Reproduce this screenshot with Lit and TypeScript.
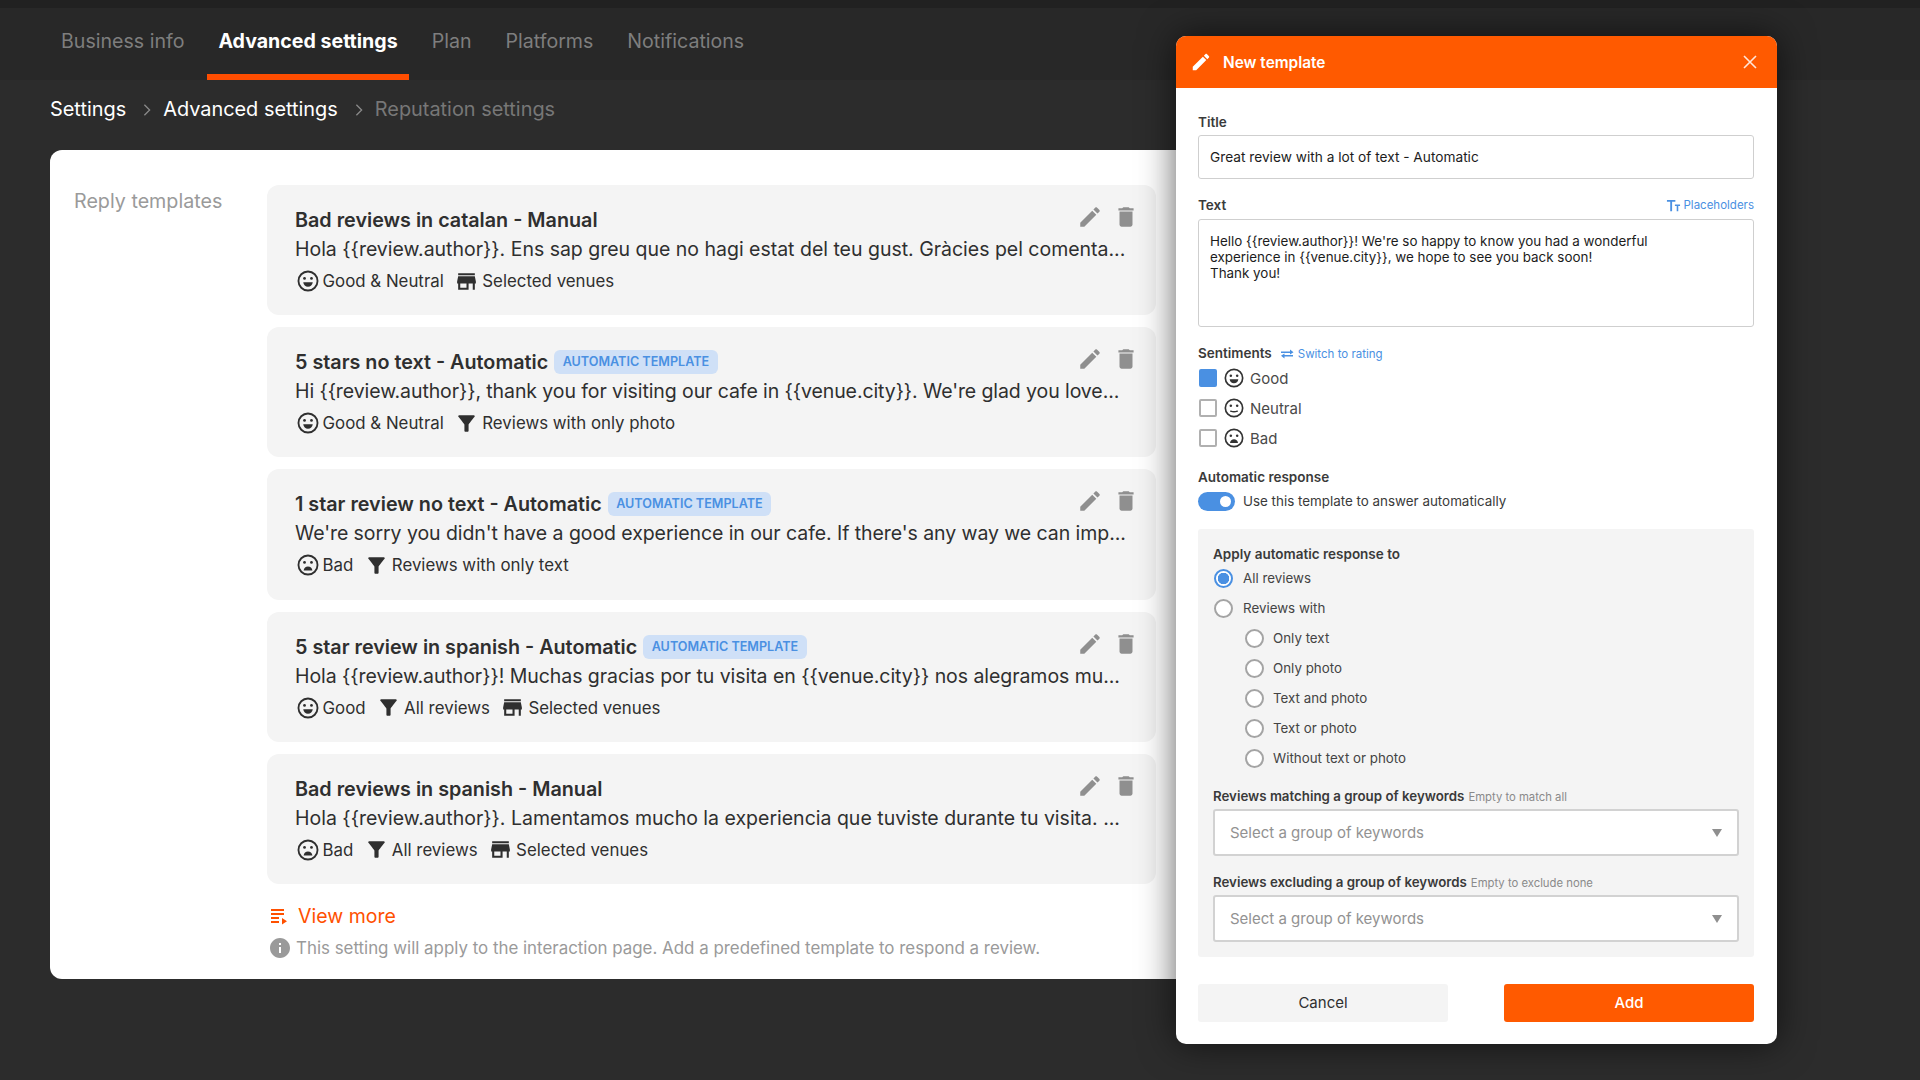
import { LitElement, html, css, svg } from "lit";
import { customElement } from "lit/decorators.js";

const P = {
  edit: "M3 17.25V21h3.75L17.81 9.94l-3.75-3.75L3 17.25zM20.71 7.04c.39-.39.39-1.02 0-1.41l-2.34-2.34c-.39-.39-1.02-.39-1.41 0l-1.83 1.83 3.75 3.75 1.83-1.83z",
  del: "M6 19c0 1.1.9 2 2 2h8c1.1 0 2-.9 2-2V7H6v12zM19 4h-3.5l-1-1h-5l-1 1H5v2h14V4z",
  store: "M20 4H4v2h16V4zm1 10v-2l-1-5H4l-1 5v2h1v6h10v-6h4v6h2v-6h1zm-9 4H6v-4h6v4z",
  filter: "M4.25 5.61C6.27 8.2 10 13 10 13v6c0 .55.45 1 1 1h2c.55 0 1-.45 1-1v-6s3.72-4.8 5.74-7.39c.51-.66.04-1.61-.79-1.61H5.04c-.83 0-1.3.95-.79 1.61z",
  info: "M12 2C6.48 2 2 6.48 2 12s4.48 10 10 10 10-4.48 10-10S17.52 2 12 2zm1 15h-2v-6h2v6zm0-8h-2V7h2v2z",
};
const icon = (d: string, cls: string) =>
  html`<svg class=${cls} viewBox="0 0 24 24" fill="currentColor"><path d=${d}></path></svg>`;

const face = (kind: "good" | "neutral" | "bad", cls = "face") => html`<svg class=${cls} viewBox="0 0 24 24">
  <circle cx="12" cy="12" r="10.4" fill="none" stroke="currentColor" stroke-width="2"></circle>
  <circle cx="8.2" cy="9.2" r="1.5" fill="currentColor"></circle>
  <circle cx="15.8" cy="9.2" r="1.5" fill="currentColor"></circle>
  ${kind === "good"
    ? svg`<path d="M6.8 13.4h10.4c-.3 3-2.5 4.9-5.2 4.9s-4.9-1.9-5.2-4.9z" fill="currentColor"></path>`
    : kind === "neutral"
      ? svg`<path d="M8 15.8c2.6 1 5.4 1 8 0" fill="none" stroke="currentColor" stroke-width="1.7" stroke-linecap="round"></path>`
      : svg`<path d="M7.2 18c.4-2.8 2.3-4.4 4.8-4.4s4.4 1.6 4.8 4.4z" fill="currentColor"></path>`}
</svg>`;

type Meta = { i: "good" | "bad" | "filter" | "store"; t: string };
const items: { title: string; badge: boolean; body: string; ls: number; meta: Meta[] }[] = [
  {
    title: "Bad reviews in catalan - Manual",
    badge: false,
    ls: -0.012,
    body: "Hola {{review.author}}. Ens sap greu que no hagi estat del teu gust. Gràcies pel comenta...",
    meta: [{ i: "good", t: "Good & Neutral" }, { i: "store", t: "Selected venues" }],
  },
  {
    title: "5 stars no text - Automatic",
    badge: true,
    ls: -0.09,
    body: "Hi {{review.author}}, thank you for visiting our cafe in {{venue.city}}. We're glad you love...",
    meta: [{ i: "good", t: "Good & Neutral" }, { i: "filter", t: "Reviews with only photo" }],
  },
  {
    title: "1 star review no text - Automatic",
    badge: true,
    ls: -0.068,
    body: "We're sorry you didn't have a good experience in our cafe. If there's any way we can imp...",
    meta: [{ i: "bad", t: "Bad" }, { i: "filter", t: "Reviews with only text" }],
  },
  {
    title: "5 star review in spanish - Automatic",
    badge: true,
    ls: -0.054,
    body: "Hola {{review.author}}! Muchas gracias por tu visita en {{venue.city}} nos alegramos mu...",
    meta: [{ i: "good", t: "Good" }, { i: "filter", t: "All reviews" }, { i: "store", t: "Selected venues" }],
  },
  {
    title: "Bad reviews in spanish - Manual",
    badge: false,
    ls: 0,
    body: "Hola {{review.author}}. Lamentamos mucho la experiencia que tuviste durante tu visita. ...",
    meta: [{ i: "bad", t: "Bad" }, { i: "filter", t: "All reviews" }, { i: "store", t: "Selected venues" }],
  },
];

@customElement("app-root")
export class AppRoot extends LitElement {
  static styles = css`
    :host {
      display: block;
      position: relative;
      width: 1920px;
      height: 1080px;
      overflow: hidden;
      background: #2c2c2c;
      font-family: Inter, "Liberation Sans", sans-serif;
      color: #2f2f2f;
    }
    * { box-sizing: border-box; }
    svg { display: block; flex: none; }
    .strip { height: 8px; background: #212121; }
    .tabs {
      height: 72px;
      background: #282828;
      display: flex;
      padding-left: 50px;
      gap: 12px;
      font-size: 19.6px;
      color: #7e7e7e;
    }
    .tab { padding: 0 11px; display: flex; align-items: center; height: 72px; padding-bottom: 6px; }
    .tab.on { color: #fff; font-weight: 700; box-shadow: inset 0 -6px 0 #ff4d00; }
    .crumbs {
      height: 70px;
      padding: 19px 0 0 50px;
      display: flex;
      align-items: flex-start;
      font-size: 19.9px;
      line-height: 20px;
      color: #fff;
    }
    .crumbs .sep { width: 10px; margin: 4px 11px 0 16px; color: #8a8a8a; }
    .crumbs .last { color: #777; }
    .card {
      margin-left: 50px;
      width: 1140px;
      height: 829px;
      background: #fff;
      border-radius: 12px;
      display: flex;
      padding: 35px 0 0 24px;
    }
    .side { width: 193px; flex: none; font-size: 19.7px; line-height: 24px; color: #9a9a9a; padding-top: 4px; }
    .main { width: 889px; flex: none; display: flex; flex-direction: column; }
    .list { display: flex; flex-direction: column; gap: 12px; }
    .item {
      height: 130.2px;
      background: #f4f4f4;
      border-radius: 12px;
      padding: 23px 17px 0 28px;
    }
    .row1 { display: flex; align-items: center; height: 24px; }
    .ttl { font-size: 19.75px; font-weight: 600; line-height: 24px; white-space: nowrap; }
    .badge {
      margin-left: 6px;
      height: 24px;
      padding: 0 8.5px;
      border-radius: 6px;
      background: #cfe0f7;
      color: #4a90e2;
      font-size: 12.6px;
      font-weight: 600;
      line-height: 24px;
      white-space: nowrap;
    }
    .acts { margin-left: auto; display: flex; gap: 10px; color: #8f8f8f; margin-top: -6px; }
    .acts svg { width: 26px; height: 26px; }
    .body { margin-top: 5px; font-size: 19.5px; line-height: 24px; white-space: nowrap; }
    .meta { margin-top: 8px; display: flex; align-items: center; height: 24px; font-size: 16.85px; gap: 10.5px; }
    .m { display: flex; align-items: center; gap: 3px; white-space: nowrap; }
    .m .ic { width: 25px; height: 25px; }
    .m .fc { width: 22px; height: 22px; margin: 0 1px 0 1.5px; }
    .more {
      margin-top: 20px;
      display: flex;
      align-items: center;
      gap: 10px;
      height: 24px;
      padding-left: 3px;
      color: #ff5000;
      font-size: 19.5px;
    }
    .more svg { width: 18px; height: 18px; }
    .hint {
      margin-top: 8px;
      display: flex;
      align-items: center;
      gap: 6px;
      height: 24px;
      padding-left: 3px;
      color: #9a9a9a;
      font-size: 16.9px;
      white-space: nowrap;
    }
    .hint svg { width: 24px; height: 24px; margin-left: -2px; margin-right: -2px; }

    .panel {
      position: absolute;
      left: 1176px;
      top: 36px;
      width: 601px;
      height: 1008px;
      background: #fff;
      border-radius: 10px;
      box-shadow: 0 0 36px rgba(0, 0, 0, 0.62);
      display: flex;
      flex-direction: column;
      overflow: hidden;
    }
    .phead {
      height: 52px;
      flex: none;
      background: #ff5a00;
      color: #fff;
      display: flex;
      align-items: center;
      padding: 0 20px 0 14px;
      font-size: 15.4px;
      font-weight: 600;
      gap: 11px;
    }
    .phead .pen { width: 22px; height: 22px; }
    .phead .x { margin-left: auto; width: 14px; height: 14px; opacity: 0.85; }
    .pbody { padding: 26px 23px 0 22px; display: flex; flex-direction: column; }
    .lab { font-size: 13.5px; font-weight: 600; line-height: 16px; color: #3a3a3a; white-space: nowrap; }
    .field {
      margin-top: 5px;
      border: 1.5px solid #cfcfcf;
      border-radius: 3px;
      font-size: 13.7px;
      line-height: 16px;
      color: #1c1c1c;
      padding: 0 11px;
    }
    .input { height: 44px; display: flex; align-items: center; }
    .lrow { margin-top: 18px; display: flex; align-items: center; justify-content: space-between; }
    .ph { display: flex; align-items: center; gap: 3px; color: #4a90e2; font-size: 11.5px; }
    .ph svg { width: 15px; height: 15px; }
    .area { margin-top: 6px; height: 108px; padding-top: 13px; font-size: 13.4px; }
    .srow { margin-top: 18px; display: flex; align-items: center; gap: 5px; }
    .sw { margin-left: 3px; margin-top: 1px; display: flex; align-items: center; gap: 4px; color: #4a90e2; font-size: 11.5px; }
    .sw svg { width: 14px; height: 14px; }
    .sents { margin-top: 2px; margin-bottom: 16px; }
    .s { height: 30px; display: flex; align-items: center; font-size: 15px; color: #4a4a4a; }
    .cb { width: 18px; height: 18px; margin-left: 1px; border: 2px solid #b0b0b0; border-radius: 2px; flex: none; }
    .cb.on { background: #4a90e2; border-color: #4a90e2; }
    .s .face { width: 20px; height: 20px; margin: 0 6px 0 7px; color: #333; }
    .tog { margin-top: 6px; display: flex; align-items: center; height: 20px; gap: 8px; font-size: 13.4px; color: #3a3a3a; }
    .track { width: 37px; height: 19px; border-radius: 10px; background: #4a90e2; position: relative; flex: none; }
    .knob { position: absolute; right: 4px; top: 4px; width: 11px; height: 11px; border-radius: 50%; background: #fff; }
    .box {
      margin-top: 18px;
      height: 428px;
      background: #f4f4f4;
      border-radius: 3px;
      padding: 17px 15px 0;
      display: flex;
      flex-direction: column;
    }
    .radios { margin-top: 1px; }
    .r { height: 30px; display: flex; align-items: center; gap: 10px; font-size: 13.35px; color: #444; white-space: nowrap; }
    .r.sub { padding-left: 31px; gap: 9px; }
    .dot { width: 19px; height: 19px; margin-left: 1px; border-radius: 50%; border: 2px solid #a4a4a4; background: #fff; flex: none; }
    .dot.on { border-color: #4a90e2; background: radial-gradient(circle, #4a90e2 0 5.5px, #fff 6px); }
    .klab { margin-top: 15px; display: flex; align-items: baseline; gap: 4px; font-size: 13.3px; }
    .klab.b { margin-top: 18px; }
    .klab small { font-size: 11.3px; font-weight: 400; color: #8a8a8a; }
    .sel {
      margin-top: 4px;
      height: 47px;
      border: 2px solid #d2d2d2;
      border-radius: 3px;
      background: #fff;
      display: flex;
      align-items: center;
      justify-content: space-between;
      padding: 0 15px;
      font-size: 15px;
      color: #929292;
    }
    .tri { width: 0; height: 0; border-left: 5.5px solid transparent; border-right: 5.5px solid transparent; border-top: 8px solid #8f8f8f; }
    .btns { margin-top: 27px; display: flex; justify-content: space-between; }
    .btn { width: 250px; height: 38px; border-radius: 3px; display: flex; align-items: center; justify-content: center; font-size: 15px; padding-bottom: 1px; }
    .cancel { background: #f4f4f4; color: #2f2f2f; }
    .add { background: #ff5a00; color: #fff; font-weight: 500; }
  `;

  private meta(m: Meta) {
    const ic = m.i === "good" || m.i === "bad" ? face(m.i, "fc") : icon(m.i === "filter" ? P.filter : P.store, "ic");
    return html`<span class="m">${ic}${m.t}</span>`;
  }

  render() {
    return html`
      <div class="strip"></div>
      <nav class="tabs">
        <div class="tab">Business info</div>
        <div class="tab on">Advanced settings</div>
        <div class="tab">Plan</div>
        <div class="tab">Platforms</div>
        <div class="tab">Notifications</div>
      </nav>
      <div class="crumbs">
        <span>Settings</span>
        <svg class="sep" viewBox="0 0 10 16" height="14"><path d="M2 2l6 6-6 6" fill="none" stroke="currentColor" stroke-width="1.5"></path></svg>
        <span>Advanced settings</span>
        <svg class="sep" viewBox="0 0 10 16" height="14"><path d="M2 2l6 6-6 6" fill="none" stroke="currentColor" stroke-width="1.5"></path></svg>
        <span class="last">Reputation settings</span>
      </div>
      <section class="card">
        <div class="side">Reply templates</div>
        <div class="main">
          <div class="list">
            ${items.map(
              (it) => html`<article class="item">
                <div class="row1">
                  <span class="ttl">${it.title}</span>
                  ${it.badge ? html`<span class="badge">AUTOMATIC TEMPLATE</span>` : ""}
                  <span class="acts">${icon(P.edit, "")}${icon(P.del, "")}</span>
                </div>
                <div class="body" style="letter-spacing:${it.ls}px">${it.body}</div>
                <div class="meta">${it.meta.map((m) => this.meta(m))}</div>
              </article>`
            )}
          </div>
          <div class="more">
            <svg viewBox="0 0 18 18" fill="currentColor"><path d="M1 2h13v2H1zM1 6h13v2H1zM1 10h8v2H1zM1 14h8v2H1zM12 11l5 3.2-5 3.2z"></path></svg>
            View more
          </div>
          <div class="hint">${icon(P.info, "")}This setting will apply to the interaction page. Add a predefined template to respond a review.</div>
        </div>
      </section>

      <aside class="panel">
        <header class="phead">
          ${icon(P.edit, "pen")}
          <span>New template</span>
          <svg class="x" viewBox="0 0 14 14"><path d="M1 1l12 12M13 1L1 13" stroke="currentColor" stroke-width="1.6" fill="none"></path></svg>
        </header>
        <div class="pbody">
          <div class="lab">Title</div>
          <div class="field input">Great review with a lot of text - Automatic</div>
          <div class="lrow">
            <span class="lab">Text</span>
            <span class="ph">
              <svg viewBox="0 0 16 16" fill="currentColor"><path d="M1 2h9v2H6.5v10h-2V4H1zM9.5 7H15v1.6h-1.9V14h-1.7V8.6H9.5z"></path></svg>
              Placeholders
            </span>
          </div>
          <div class="field area">
            Hello {{review.author}}! We're so happy to know you had a wonderful<br />
            experience in {{venue.city}}, we hope to see you back soon!<br />
            Thank you!
          </div>
          <div class="srow">
            <span class="lab">Sentiments</span>
            <span class="sw">
              <svg viewBox="0 0 14 14" fill="currentColor"><path d="M1 4.500h9V2.600L13.500 5.200 10 7.400V6H1zM13 9.500H4.500v1.900L1 8.800 4.500 6.600V8H13z"></path></svg>
              Switch to rating
            </span>
          </div>
          <div class="sents">
            <div class="s"><span class="cb on"></span>${face("good")}Good</div>
            <div class="s"><span class="cb"></span>${face("neutral")}Neutral</div>
            <div class="s"><span class="cb"></span>${face("bad")}Bad</div>
          </div>
          <div class="lab">Automatic response</div>
          <div class="tog"><span class="track"><span class="knob"></span></span>Use this template to answer automatically</div>
          <div class="box">
            <div class="lab">Apply automatic response to</div>
            <div class="radios">
              <div class="r"><span class="dot on"></span>All reviews</div>
              <div class="r"><span class="dot"></span>Reviews with</div>
              ${["Only text", "Only photo", "Text and photo", "Text or photo", "Without text or photo"].map(
                (t) => html`<div class="r sub"><span class="dot"></span>${t}</div>`
              )}
            </div>
            <div class="lab klab">Reviews matching a group of keywords <small>Empty to match all</small></div>
            <div class="sel">Select a group of keywords<span class="tri"></span></div>
            <div class="lab klab b">Reviews excluding a group of keywords <small>Empty to exclude none</small></div>
            <div class="sel">Select a group of keywords<span class="tri"></span></div>
          </div>
          <div class="btns">
            <div class="btn cancel">Cancel</div>
            <div class="btn add">Add</div>
          </div>
        </div>
      </aside>
    `;
  }
}
